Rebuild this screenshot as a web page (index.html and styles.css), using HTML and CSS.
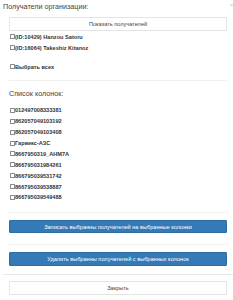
FILE: index.html
```html
<!DOCTYPE html>
<html lang="ru">
<head>
    <meta charset="UTF-8">
    <title>Получатели организации</title>
    <link rel="stylesheet" href="styles.css">
</head>
<body>
    <div class="modal-content">
        <!-- Header -->
        <div class="modal-header">
            <h4 class="modal-title">Получатели организации:</h4>
            <button type="button" class="close">&times;</button>
        </div>

        <div class="modal-body">
            <button type="button" class="btn btn-default">Показать получателей</button>

            <div class="recipients">
                <label class="check"><input type="checkbox">(ID:10429) Hanzou Satoru</label>
                <label class="check"><input type="checkbox">(ID:16064) Takeshiz Kitanoz</label>
            </div>
            <label class="check select-all"><input type="checkbox">Выбрать всех</label>

            <hr>

            <h4 class="section-title">Список колонок:</h4>
            <div class="columns">
                <label class="check item"><input type="checkbox">012497008333381</label>
                <label class="check item"><input type="checkbox">862057049103192</label>
                <label class="check item"><input type="checkbox">862057049103408</label>
                <label class="check item"><input type="checkbox">Гарвекс-АЗС</label>
                <label class="check item"><input type="checkbox">8667950319_AHM7A</label>
                <label class="check item"><input type="checkbox">866795031984261</label>
                <label class="check item"><input type="checkbox">866795039531742</label>
                <label class="check item"><input type="checkbox">866795039538887</label>
                <label class="check item"><input type="checkbox">866795039549488</label>
            </div>

            <hr class="hr-buttons">
            <button type="button" class="btn btn-primary">Записать выбранны получателей на выбранные колонки</button>
            <hr class="hr-between">
            <button type="button" class="btn btn-primary">Удалить выбранны получателей с выбранных колонок</button>
        </div>

        <!-- Footer -->
        <div class="modal-footer">
            <button type="button" class="btn btn-default">Закрыть</button>
        </div>
    </div>
</body>
</html>
```

FILE: styles.css
```css
* {
    box-sizing: border-box;
    margin: 0;
    padding: 0;
}
body {
    font-family: "Liberation Sans", Arial, Helvetica, sans-serif;
    font-size: 5.6px;
    color: #333;
    background: #fff;
}
.modal-content {
    margin-left: 3px;
    width: 230px;
}
.modal-header {
    display: flex;
    justify-content: space-between;
    align-items: flex-start;
    height: 14px;
    padding-top: 2px;
}
.modal-title,
.section-title {
    font-size: 7.2px;
    font-weight: normal;
    line-height: 10px;
    color: #444;
}
.close {
    background: none;
    border: none;
    color: #d0d0d0;
    font-family: "Liberation Sans", Arial, sans-serif;
    font-size: 5px;
    font-weight: bold;
    line-height: 5px;
    margin-top: 1px;
    margin-right: 0;
    cursor: pointer;
}
.modal-body {
    padding: 3px 6px 8px 6px;
}
.btn {
    display: block;
    width: 100%;
    height: 14px;
    padding: 2px 5px;
    font-family: "Liberation Sans", Arial, sans-serif;
    font-size: 5.6px;
    line-height: 8px;
    text-align: center;
    border-radius: 1px;
    cursor: pointer;
}
.btn-default {
    background: #fff;
    color: #444;
    border: 1px solid #e4e4e4;
}
.btn-primary {
    background: #337ab7;
    color: #fff;
    border: 1px solid #2e6da4;
    height: 13.5px;
}
.check {
    display: flex;
    align-items: center;
    height: 11px;
    padding-left: 1px;
    font-weight: bold;
    color: #333;
}
.check input {
    appearance: none;
    width: 5px;
    height: 5px;
    border: 1px solid #8a8a8a;
    border-radius: 0.5px;
    background: #fff;
    margin: 0;
    flex: none;
}
.select-all {
    margin-top: 8px;
}
.columns .item {
    height: 10.875px;
}
hr {
    border: none;
    border-top: 1px solid #f0f0f0;
    margin: 8px 0 8px 0;
}
.section-title {
    margin-bottom: 6px;
}
.hr-buttons {
    margin: 9px 0 7px 0;
}
.hr-between {
    margin: 11px 0 7px 0;
}
.modal-footer {
    border-top: 1px solid #e8e8e8;
    padding: 6px 6px 6px 6px;
}
```
